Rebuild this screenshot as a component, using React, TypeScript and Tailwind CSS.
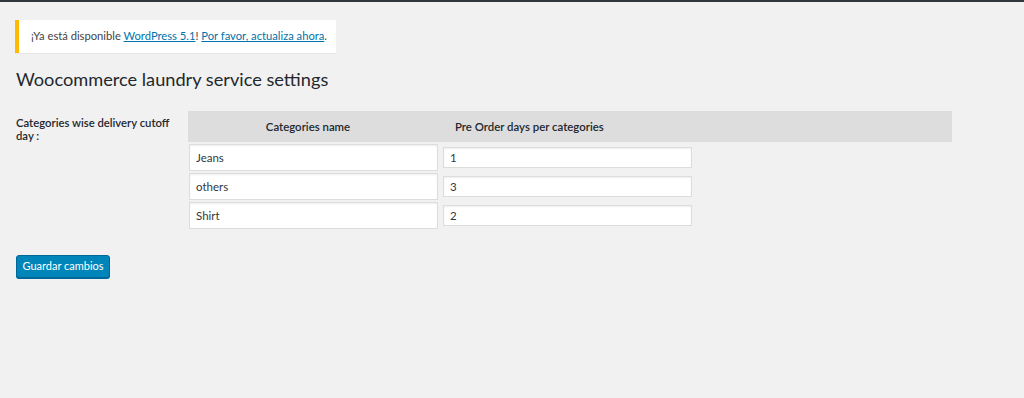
const rows = [
  { name: "Jeans", days: "1" },
  { name: "others", days: "3" },
  { name: "Shirt", days: "2" },
]

export default function App() {
  return (
    <div className="min-h-[398px] bg-[#f1f1f1] font-['Lato',sans-serif] text-[11.5px] text-[#444]">
      <div className="h-[2px] bg-[#32373c]" />

      <div className="px-[15px] pt-[18px]">
        {/* Update notice */}
        <div className="flex h-[33px] w-[321px] items-center border-l-4 border-[#ffb900] bg-white pl-[12px] shadow-[0_1px_1px_rgba(0,0,0,0.04)]">
          <p className="whitespace-nowrap text-[11.2px] text-[#444]">
            ¡Ya está disponible{" "}
            <a href="#" className="text-[#0073aa] underline">WordPress 5.1</a>!{" "}
            <a href="#" className="text-[#0073aa] underline">Por favor, actualiza ahora</a>.
          </p>
        </div>

        <h1 className="mt-[14px] pl-px text-[18.2px] font-normal leading-[24px] text-[#23282d]">
          Woocommerce laundry service settings
        </h1>

        {/* Settings row */}
        <div className="mt-[20px] flex">
          <div className="w-[173px] pl-px pt-[5px]">
            <p className="w-[158px] text-[11.3px] font-semibold leading-[13px] text-[#23282d]">
              Categories wise delivery cutoff day :
            </p>
          </div>

          <div className="w-[764px]">
            <div className="flex h-[31px] items-center bg-[#dddddd] text-[11.4px] font-semibold text-[#23282d]">
              <div className="w-[240px] text-center">Categories name</div>
              <div className="pl-[27px]">Pre Order days per categories</div>
            </div>

            <div className="mt-[2px] flex flex-col gap-[2px]">
              {rows.map((row) => (
                <div key={row.name} className="flex items-center gap-[5px]">
                  <input
                    readOnly
                    value={row.name}
                    className="ml-px h-[27px] w-[249px] border border-[#ddd] bg-white px-[6px] text-[11.5px] text-[#32373c] shadow-[inset_0_1px_2px_rgba(0,0,0,0.07)] outline-none"
                  />
                  <input
                    readOnly
                    value={row.days}
                    className="h-[21px] w-[249px] border border-[#ddd] bg-white px-[6px] text-[11.5px] text-[#32373c] shadow-[inset_0_1px_2px_rgba(0,0,0,0.07)] outline-none"
                  />
                </div>
              ))}
            </div>
          </div>
        </div>

        <button className="mt-[26px] ml-px h-[23px] w-[94px] rounded-[3px] border border-[#006799] bg-[#0085ba] text-[11px] text-white shadow-[0_1px_0_#006799]">
          Guardar cambios
        </button>
      </div>
    </div>
  )
}
